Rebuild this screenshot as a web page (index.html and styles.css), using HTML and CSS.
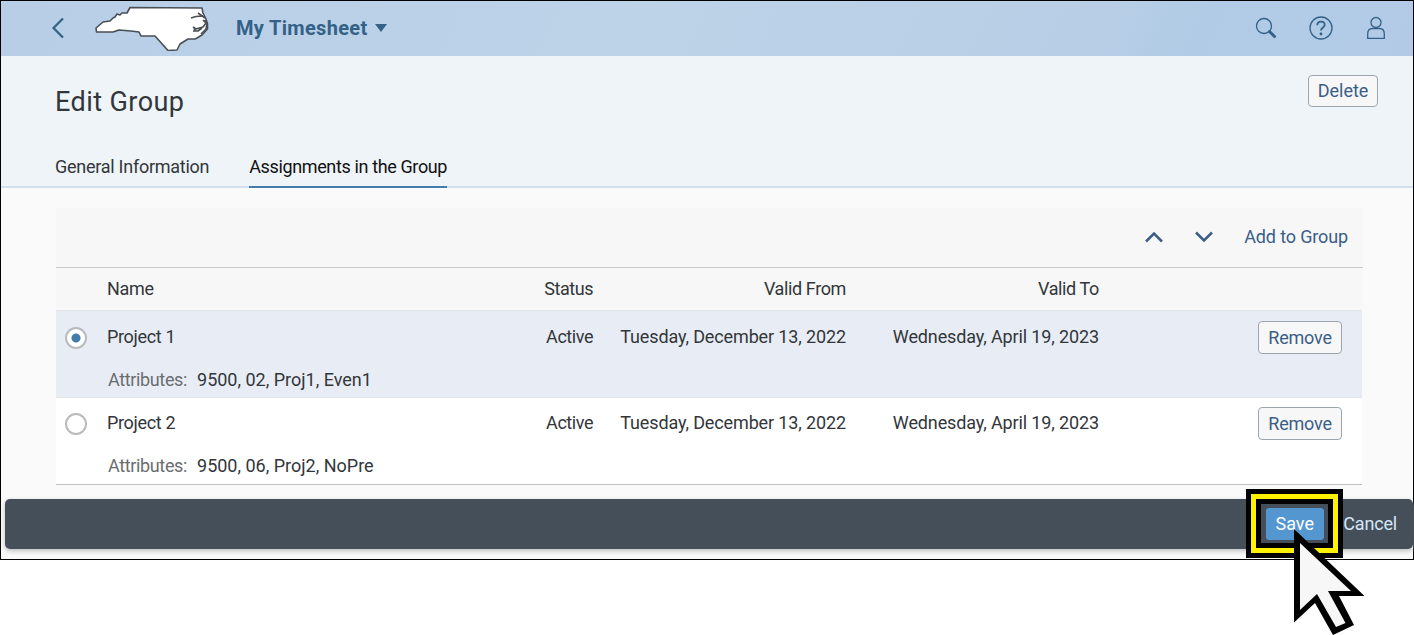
FILE: index.html
```html
<!DOCTYPE html>
<html lang="en">
<head>
<meta charset="utf-8">
<title>My Timesheet</title>
<link rel="stylesheet" href="styles.css">
</head>
<body>
<div class="app">
  <header class="shell">
    <svg class="back" width="14" height="22" viewBox="0 0 14 22"><path d="M12 1.500 2.500 11 12 20.500"/></svg>
    <svg class="logo" width="118" height="48" viewBox="0 0 118 48"><path class="land" d="M37 4.500 109 5 110 10 113 16 114.500 21 114.500 26 109 32 104 35 102 36 95 36 87 41 84 47 75 47.500 62 33 48 33 46 29 38 28 26 27 20 29 3.500 29 3 25 10 19 17 18 20 15 22 14 24 11 27 12 29 10 34 10Z"/><path class="coast" d="M98 15 103 13.500 110 13M105 10 112 15M100 24 103 26 110 24 113 20 110 17M100 28 105 28 109 25M101 24 102 28M112 17 114 21 113 26 108 31"/></svg>
    <h1 class="shell-title">My Timesheet</h1>
    <svg class="caret" width="12" height="8" viewBox="0 0 12 8"><path d="M0 0H12L6 8Z"/></svg>
    <nav class="shell-actions">
      <svg width="24" height="24" viewBox="0 0 24 24"><circle cx="10" cy="10" r="7.500"/><path class="handle" d="m15.500 15.500 5 5"/></svg>
      <svg width="24" height="24" viewBox="0 0 24 24"><circle cx="12" cy="12" r="11"/><path class="mark" d="M8.300 9.300C8.300 7 9.700 5.700 12 5.700S15.700 7 15.700 9C15.700 11.500 12 11.500 12 14.500"/><circle class="dot" cx="12" cy="18" r="1.400"/></svg>
      <svg width="24" height="24" viewBox="0 0 24 24"><circle cx="12" cy="6.500" r="5"/><path d="M3.700 22.300V18C3.700 14.500 5.500 12.500 8.500 12.500H15.500C18.500 12.500 20.300 14.500 20.300 18V22.300Z"/></svg>
    </nav>
  </header>
  <section class="page-head">
    <div class="title-row">
      <h2 class="title">Edit Group</h2>
      <button class="btn delete">Delete</button>
    </div>
    <div class="tabs">
      <div class="tab tab-general">General Information</div>
      <div class="tab tab-active">Assignments in the Group</div>
    </div>
  </section>
  <main class="content">
    <div class="toolbar">
      <svg width="20" height="12" viewBox="0 0 20 12"><path d="m2 10.500 8-8 8 8"/></svg>
      <svg width="20" height="12" viewBox="0 0 20 12"><path d="m2 1.500 8 8 8-8"/></svg>
      <span class="add">Add to Group</span>
    </div>
    <div class="grid head">
      <span class="name">Name</span><span class="status">Status</span><span class="from">Valid From</span><span class="to">Valid To</span>
    </div>
    <div class="row selected">
      <div class="grid">
        <i class="radio"></i><span class="name">Project 1</span><span class="status">Active</span><span class="date">Tuesday, December 13, 2022</span><span class="date">Wednesday, April 19, 2023</span><button class="btn remove">Remove</button>
      </div>
      <div class="attrs"><span class="label">Attributes:</span><span class="value">9500, 02, Proj1, Even1</span></div>
    </div>
    <div class="row last">
      <div class="grid">
        <i class="radio"></i><span class="name">Project 2</span><span class="status">Active</span><span class="date">Tuesday, December 13, 2022</span><span class="date">Wednesday, April 19, 2023</span><button class="btn remove">Remove</button>
      </div>
      <div class="attrs"><span class="label">Attributes:</span><span class="value">9500, 06, Proj2, NoPre</span></div>
    </div>
  </main>
  <footer class="footer">
    <div class="highlight"><button class="save">Save</button></div>
    <span class="cancel">Cancel</span>
  </footer>
</div>
<svg class="pointer" width="74" height="110" viewBox="0 0 74 110"><path class="pointer-edge" d="M4 3V96.500L25 77 43 109 64 99 49 70H74.500Z"/><path class="pointer-fill" d="M10 17V84L27 68 46 101 55.500 97 38 65H61Z"/></svg>
</body>
</html>
```

FILE: styles.css
```css
* { box-sizing: border-box; }
body { margin: 0; background: #fff; font: 18px/24px Roboto, "Liberation Sans", sans-serif; color: #32363a; height: 635px; overflow: hidden; position: relative; }
h1, h2 { margin: 0; }
button { font: inherit; margin: 0; padding: 0; }
span, button, h1, h2, .tab { white-space: nowrap; }
svg { display: block; flex: none; fill: none; }
.app { width: 1414px; height: 560px; border: 1px solid #000; background: #fafafa; display: flex; flex-direction: column; }
.shell { height: 55px; display: flex; align-items: center; padding: 0 25px 2px 50px; background: linear-gradient(115deg, #b8cee7, #bdd3e8 45%, #b7cee6 78%, #b1cbe6 84%, #b2cae5); stroke: #346187; }
.back { stroke-width: 2.200; }
.logo { margin: -1px 0 0 28px; stroke: #4a4f54; stroke-width: 1.600; stroke-linejoin: round; }
.land { fill: #fff; }
.shell-title { margin-left: 25px; font-size: 20px; font-weight: 700; line-height: 26px; letter-spacing: .32px; color: #346187; }
.caret { margin-left: 7px; fill: #346187; stroke: none; }
.shell-actions { margin-left: auto; display: flex; gap: 31px; stroke-width: 1.300; }
.handle { stroke-width: 3; stroke-linecap: round; }
.mark { stroke-width: 1.800; }
.dot { fill: #346187; stroke: none; }
.page-head { height: 132px; background: #eff4f9; border-bottom: 2px solid #d1e0ee; padding-left: 54px; }
.title-row { display: flex; justify-content: space-between; height: 90px; padding: 19px 35px 0 0; }
.title { font-size: 27px; font-weight: 400; line-height: 54px; letter-spacing: .42px; }
.btn { border: 1px solid #9ba5af; border-radius: 4px; background: #f7f7f7; color: #3b5e88; }
.delete { width: 70px; height: 32px; }
.tabs { display: flex; gap: 40px; height: 42px; }
.tab { height: 42px; line-height: 42px; }
.tab-general { letter-spacing: -.26px; }
.tab-active { letter-spacing: -.37px; color: #111; border-bottom: 2px solid #427cac; }
.content { padding: 20px 50px 0 55px; height: 311px; }
.toolbar { height: 60px; background: #f7f7f7; border-bottom: 1px solid #c8c9ca; display: flex; align-items: center; justify-content: flex-end; gap: 30px; padding: 0 15px 2px 0; stroke: #3b5e88; stroke-width: 2.500; color: #3b5e88; }
.add { stroke: none; letter-spacing: -.14px; }
.grid { display: grid; grid-template-columns: 51px 429px 57px 253px 253px 243px; }
.grid > * { justify-self: end; }
.grid > .name { justify-self: start; grid-column: 2; letter-spacing: -.33px; }
.head { height: 43px; background: #f7f7f7; align-items: center; border-bottom: 1px solid #e2e4e6; margin-right: 1px; }
.status { letter-spacing: -.45px; }
.from, .to { letter-spacing: -.38px; }
.date { letter-spacing: -.13px; }
.row { height: 87px; background: #fff; margin-right: 1px; padding-top: 10px; border-bottom: 1px solid #e1e4e8; }
.row .grid { height: 43px; line-height: 31px; }
.selected { background: #e8edf5; }
.last { padding-top: 9px; border-bottom-color: #bfc0c1; }
.radio { justify-self: start !important; width: 22px; height: 22px; margin: 6px 0 0 9px; border: 2px solid #b9babc; border-radius: 50%; background: #fff; }
.selected .radio { background: radial-gradient(circle, #427cac 4px, #fff 5px); }
.remove { width: 84px; height: 33px; letter-spacing: -.2px; }
.attrs { padding-left: 52px; line-height: 31px; display: flex; gap: 10px; }
.label { color: #6a6d70; letter-spacing: -.36px; }
.footer { margin-left: 4px; height: 50px; background: #444f59; border-radius: 5px; display: flex; align-items: center; justify-content: flex-end; box-shadow: 0 2px 5px #bbb; padding-right: 16px; }
.highlight { width: 97px; height: 69px; flex: none; margin-top: -1px; border: 5px solid #000; background: #444f59; box-shadow: inset 0 0 0 5px #fff200, inset 0 0 0 10px #000; display: flex; align-items: center; justify-content: center; }
.save { width: 58px; height: 32px; border: 0; border-radius: 3px; background: #5496cf; color: #fff; }
.cancel { color: #d5e7f9; letter-spacing: -.17px; }
.pointer { position: absolute; left: 1290px; top: 526px; }
.pointer-edge { fill: #000; }
.pointer-fill { fill: #f7f7f7; }
```
